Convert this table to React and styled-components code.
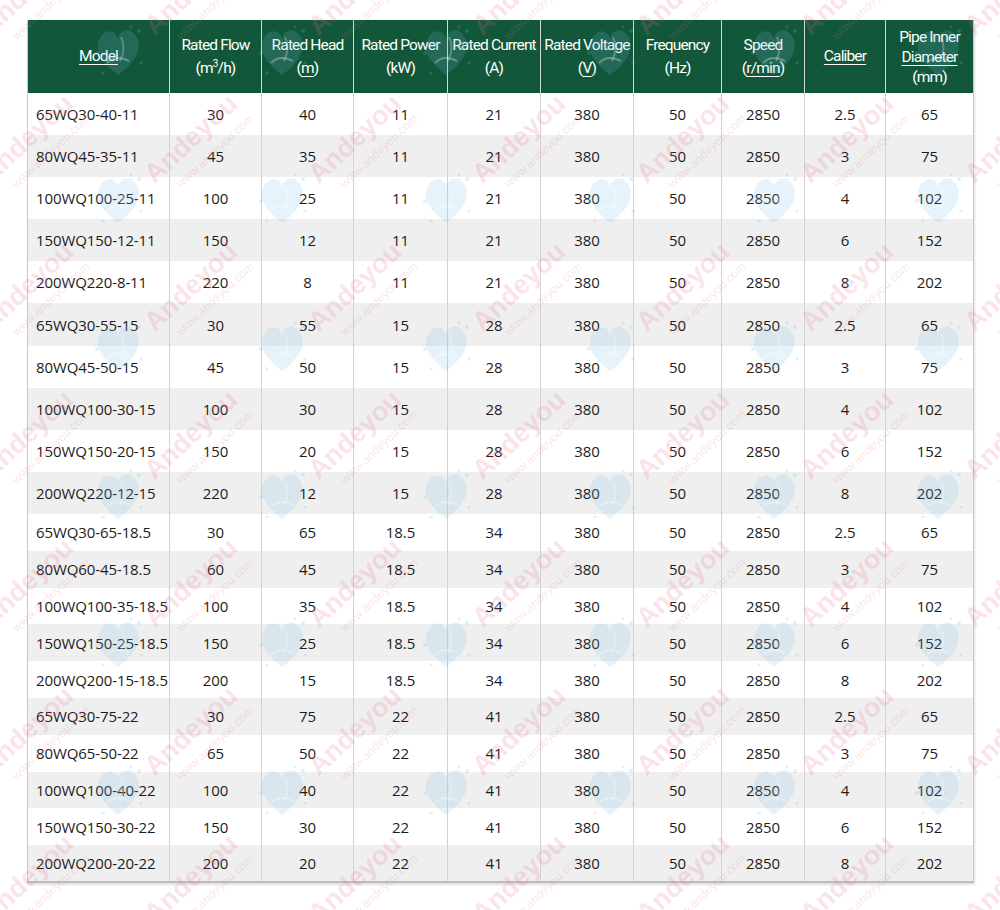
import React from 'react'
import styled, { createGlobalStyle } from 'styled-components'

const GlobalStyle = createGlobalStyle`
  html, body {
    margin: 0;
    padding: 0;
    background: #ffffff;
  }
  body {
    font-family: "Open Sans", "Liberation Sans", sans-serif;
  }
`

const colWidths = [142, 92, 92, 94, 93, 93, 88, 83, 81, 88]

const rows = [
  ['65WQ30-40-11', 30, 40, 11, 21, 380, 50, 2850, 2.5, 65],
  ['80WQ45-35-11', 45, 35, 11, 21, 380, 50, 2850, 3, 75],
  ['100WQ100-25-11', 100, 25, 11, 21, 380, 50, 2850, 4, 102],
  ['150WQ150-12-11', 150, 12, 11, 21, 380, 50, 2850, 6, 152],
  ['200WQ220-8-11', 220, 8, 11, 21, 380, 50, 2850, 8, 202],
  ['65WQ30-55-15', 30, 55, 15, 28, 380, 50, 2850, 2.5, 65],
  ['80WQ45-50-15', 45, 50, 15, 28, 380, 50, 2850, 3, 75],
  ['100WQ100-30-15', 100, 30, 15, 28, 380, 50, 2850, 4, 102],
  ['150WQ150-20-15', 150, 20, 15, 28, 380, 50, 2850, 6, 152],
  ['200WQ220-12-15', 220, 12, 15, 28, 380, 50, 2850, 8, 202],
  ['65WQ30-65-18.5', 30, 65, 18.5, 34, 380, 50, 2850, 2.5, 65],
  ['80WQ60-45-18.5', 60, 45, 18.5, 34, 380, 50, 2850, 3, 75],
  ['100WQ100-35-18.5', 100, 35, 18.5, 34, 380, 50, 2850, 4, 102],
  ['150WQ150-25-18.5', 150, 25, 18.5, 34, 380, 50, 2850, 6, 152],
  ['200WQ200-15-18.5', 200, 15, 18.5, 34, 380, 50, 2850, 8, 202],
  ['65WQ30-75-22', 30, 75, 22, 41, 380, 50, 2850, 2.5, 65],
  ['80WQ65-50-22', 65, 50, 22, 41, 380, 50, 2850, 3, 75],
  ['100WQ100-40-22', 100, 40, 22, 41, 380, 50, 2850, 4, 102],
  ['150WQ150-30-22', 150, 30, 22, 41, 380, 50, 2850, 6, 152],
  ['200WQ200-20-22', 200, 20, 22, 41, 380, 50, 2850, 8, 202],
]

function Heart() {
  return (
    <svg width="54" height="58" viewBox="0 0 54 58">
      <path d="M27 52 C 9 38, 3 26, 9 15 C 15 5, 25 7, 27 16 C 29 6, 39 4, 45 13 C 52 24, 46 38, 27 52 Z" fill="rgba(120,190,230,0.18)" />
      <path d="M16 40 C 22 34, 30 34, 38 38" stroke="rgba(255,255,255,0.3)" strokeWidth="2" fill="none" />
      <path d="M30 14 C 34 22, 33 30, 29 38" stroke="rgba(255,255,255,0.25)" strokeWidth="2" fill="none" />
      <circle cx="6" cy="30" r="2" fill="rgba(120,190,230,0.22)" />
      <circle cx="48" cy="8" r="2" fill="rgba(120,190,230,0.22)" />
      <circle cx="50" cy="40" r="1.6" fill="rgba(120,190,230,0.22)" />
      <circle cx="40" cy="4" r="1.4" fill="rgba(120,190,230,0.22)" />
      <circle cx="12" cy="50" r="1.6" fill="rgba(120,190,230,0.22)" />
    </svg>
  )
}

function Watermarks() {
  const xs = [-137, 27, 191, 355, 519, 683, 847, 1011]
  const ys = [-9, 139, 287, 435, 583, 731, 879]
  const marks = []
  xs.forEach((x, i) => {
    ys.forEach((y, j) => {
      marks.push(
        <React.Fragment key={`${i}-${j}`}>
          <BrandMark style={{ left: x, top: y }}>Andeyou</BrandMark>
          <SiteMark style={{ left: x + 24, top: y + 12 }}>www.andeyou.com</SiteMark>
          <HeartMark style={{ left: x - 73, top: y + 61 }}><Heart /></HeartMark>
        </React.Fragment>
      )
    })
  })
  return <Overlay aria-hidden="true">{marks}</Overlay>
}

function App() {
  return (
    <Page>
      <GlobalStyle />
      <Table>
        <colgroup>
          {colWidths.map((w, i) => <col key={i} style={{ width: w }} />)}
        </colgroup>
        <thead>
          <tr>
            <HeadCell><U>Model</U></HeadCell>
            <HeadCell>Rated Flow<br />(m<Sup>3</Sup>/h)</HeadCell>
            <HeadCell>Rated Head<br />(<U>m</U>)</HeadCell>
            <HeadCell>Rated Power<br />(kW)</HeadCell>
            <HeadCell>Rated Current<br />(A)</HeadCell>
            <HeadCell>Rated Voltage<br />(<U>V</U>)</HeadCell>
            <HeadCell>Frequency<br />(Hz)</HeadCell>
            <HeadCell>Speed<br />(<U>r/min</U>)</HeadCell>
            <HeadCell><U>Caliber</U></HeadCell>
            <HeadCell $tight>Pipe Inner<br /><U>Diameter</U><br />(mm)</HeadCell>
          </tr>
        </thead>
        <tbody>
          {rows.map((r, i) => (
            <Row key={r[0]} $shade={i % 2 === 1} $compact={i >= 10}>
              {r.map((v, k) => (
                <Cell key={k} $left={k === 0}>{v}</Cell>
              ))}
            </Row>
          ))}
        </tbody>
      </Table>
      <Watermarks />
    </Page>
  )
}

export default App

const Page = styled.div`
  position: relative;
  width: 1000px;
  height: 910px;
  box-sizing: border-box;
  padding: 20px 0 0 27px;
  overflow: hidden;
  background: #ffffff;
`

const Table = styled.table`
  width: 946px;
  table-layout: fixed;
  border-collapse: collapse;
  border-left: 1px solid #c9c9c9;
  border-right: 1px solid #c9c9c9;
  border-bottom: 2px solid #bdbdbd;
  box-shadow: 1px 2px 2px rgba(0, 0, 0, 0.12);
`

const HeadCell = styled.th`
  height: 73px;
  padding: 0;
  background: #12573a;
  color: #ffffff;
  font-family: Roboto, "Open Sans", sans-serif;
  font-weight: 400;
  font-size: 15.5px;
  letter-spacing: -0.85px;
  line-height: ${(p) => (p.$tight ? '20px' : '23px')};
  text-align: center;
  vertical-align: middle;
  white-space: nowrap;
  border-left: 1px solid #cfd9d3;
  &:first-child {
    border-left: none;
  }
`

const U = styled.span`
  text-decoration: underline;
  text-decoration-thickness: 1px;
  text-underline-offset: 3px;
`

const Sup = styled.sup`
  font-size: 10px;
  line-height: 0;
  vertical-align: 6px;
`

const Row = styled.tr`
  height: ${(p) => (p.$compact ? '36.8px' : '42.1px')};
  background: ${(p) => (p.$shade ? '#efefef' : '#ffffff')};
`

const Cell = styled.td`
  padding: ${(p) => (p.$left ? '0 0 0 8px' : '0')};
  text-align: ${(p) => (p.$left ? 'left' : 'center')};
  vertical-align: middle;
  font-family: "Open Sans", "Liberation Sans", sans-serif;
  font-size: 15px;
  letter-spacing: -0.1px;
  color: #1c1c1c;
  white-space: nowrap;
  border-left: 1px solid #d2d2d2;
  &:first-child {
    border-left: none;
  }
`

const Overlay = styled.div`
  position: absolute;
  inset: 0;
  pointer-events: none;
  z-index: 2;
`

const BrandMark = styled.span`
  position: absolute;
  transform: translate(-50%, -50%) rotate(-43deg);
  font-family: "Liberation Sans", Arial, sans-serif;
  font-weight: 700;
  font-size: 27px;
  color: rgba(236, 110, 145, 0.2);
  white-space: nowrap;
`

const SiteMark = styled.span`
  position: absolute;
  transform: translate(-50%, -50%) rotate(-43deg);
  font-family: "Liberation Sans", Arial, sans-serif;
  font-size: 12px;
  color: rgba(236, 110, 145, 0.2);
  white-space: nowrap;
`

const HeartMark = styled.div`
  position: absolute;
  transform: translate(-50%, -50%);
  display: flex;
`
